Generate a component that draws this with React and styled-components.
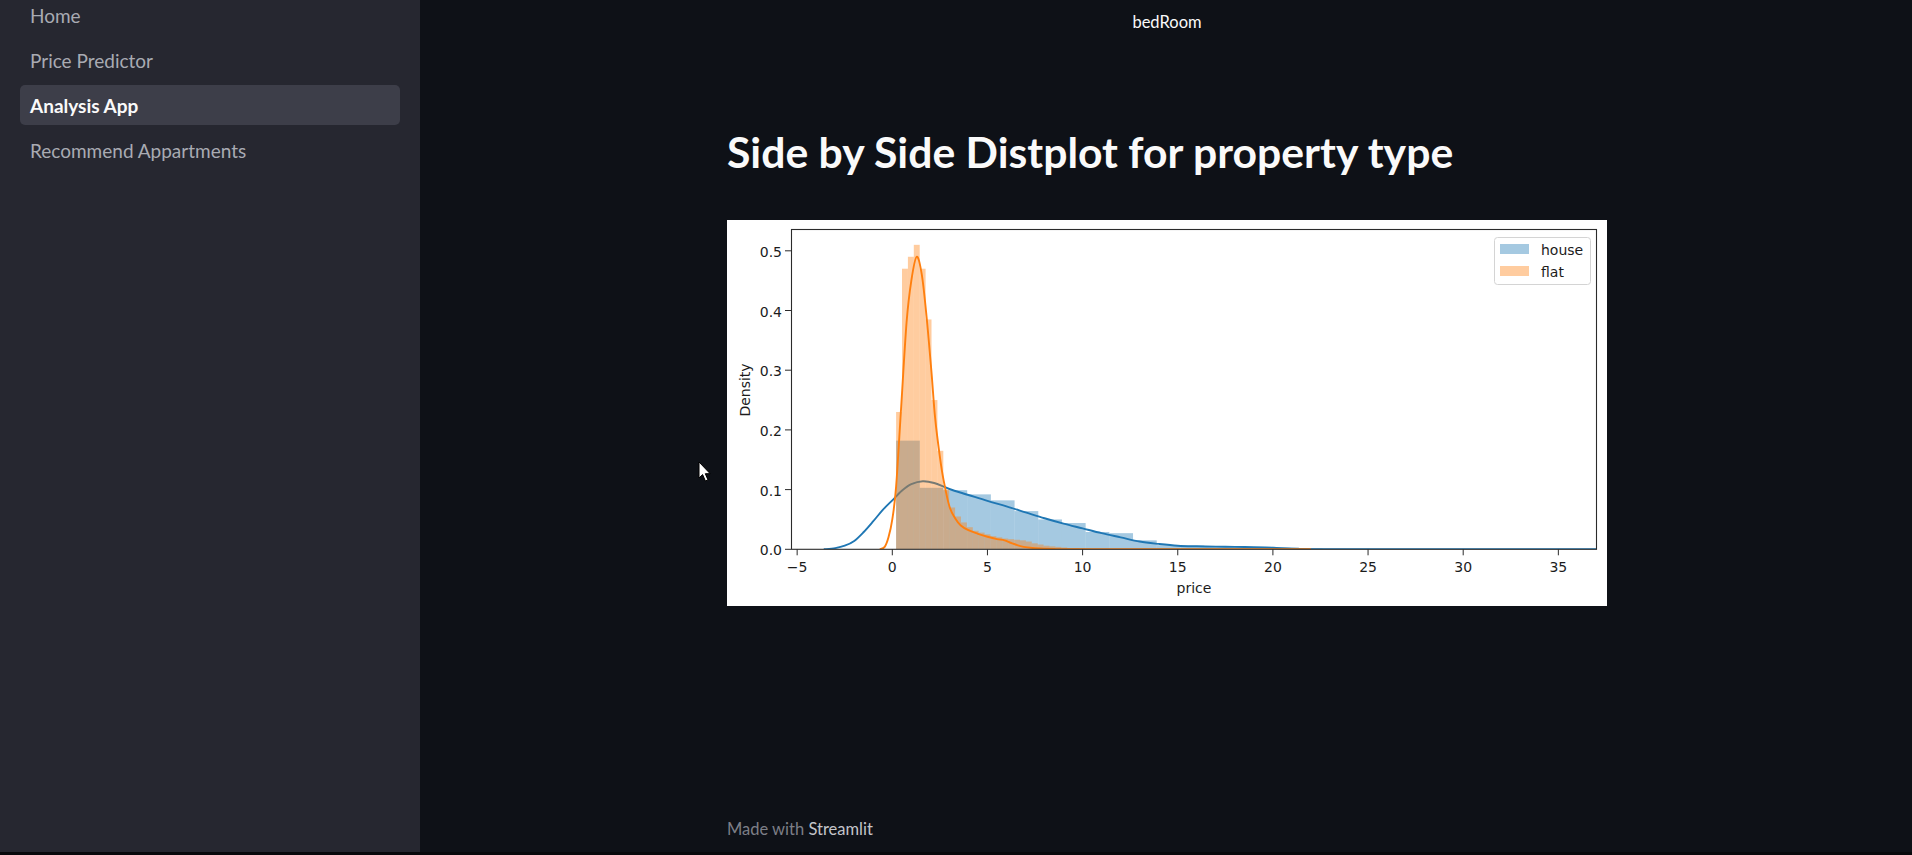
import React from "react";
import styled, { createGlobalStyle } from "styled-components";

const GlobalStyle = createGlobalStyle`
  html, body {
    margin: 0;
    padding: 0;
    background: #08090c;
    overflow: hidden;
  }
  * {
    box-sizing: border-box;
  }
`;

// chart geometry (pixels inside the 880x386 figure)
const X0 = 165.3; // x = 0
const SX = 19.03; // px per unit of price
const Y0 = 329.3; // density = 0
const SY = 597; // px per unit of density
const AX = { left: 64, right: 870, top: 9, bottom: 329.3 };

const px = (x) => X0 + x * SX;
const py = (y) => Y0 - y * SY;

const BLUE = "#1f77b4";
const ORANGE = "#ff7f0e";

const houseKde = [
  [-3.6, 0], [-3.0, 0.002], [-2.5, 0.006], [-2.0, 0.014], [-1.5, 0.029],
  [-1.0, 0.047], [-0.5, 0.066], [0, 0.082], [0.5, 0.098], [1.0, 0.109],
  [1.6, 0.114], [2.2, 0.111], [3.0, 0.101], [4.0, 0.091], [5.0, 0.081],
  [6.0, 0.072], [7.0, 0.062], [8.0, 0.052], [9.0, 0.043], [10.0, 0.035],
  [11.0, 0.027], [12.0, 0.02], [13.0, 0.013], [14.0, 0.009], [15.0, 0.006],
  [16.0, 0.005], [17.0, 0.0045], [18.0, 0.004], [19.0, 0.0035], [20.0, 0.0025],
  [21.0, 0.001], [22.0, 0.0003], [23.0, 0], [38, 0],
];

const flatKde = [
  [-0.65, 0], [-0.4, 0.004], [-0.2, 0.02], [0, 0.05], [0.2, 0.105],
  [0.45, 0.23], [0.75, 0.38], [1.0, 0.45], [1.28, 0.49], [1.55, 0.46],
  [1.8, 0.39], [2.05, 0.3], [2.25, 0.22], [2.5, 0.155], [2.7, 0.115],
  [3.0, 0.072], [3.3, 0.052], [3.6, 0.04], [4.0, 0.032], [4.5, 0.026],
  [5.0, 0.021], [5.5, 0.017], [5.9, 0.015], [6.3, 0.01], [6.9, 0.004],
  [7.5, 0.002], [8.5, 0.0005], [10, 0], [22, 0],
];

const houseBins = {
  start: 0.2,
  width: 1.245,
  heights: [
    0.182, 0.103, 0.099, 0.092, 0.082, 0.064, 0.05, 0.044, 0.029, 0.027,
    0.015, 0.007, 0.006, 0.005, 0.004, 0.004, 0.003, 0.0015, 0.001, 0.0008,
    0.0005, 0.0005, 0.0004, 0.0004,
  ],
};

const flatBins = {
  start: 0.2,
  width: 0.31,
  heights: [
    0.23, 0.47, 0.49, 0.51, 0.47, 0.385, 0.25, 0.165, 0.1, 0.07, 0.055,
    0.045, 0.037, 0.031, 0.028, 0.025, 0.022, 0.02, 0.018, 0.017, 0.016,
    0.015, 0.013, 0.01, 0.008, 0.006, 0.005, 0.004, 0.003, 0.002, 0.002,
    0.0015, 0.001,
  ],
};

// catmull-rom -> cubic bezier so the kde lines come out smooth
function smoothPath(points) {
  const p = points.map(([x, y]) => [px(x), py(y)]);
  let d = `M${p[0][0].toFixed(2)},${p[0][1].toFixed(2)}`;
  for (let i = 0; i < p.length - 1; i++) {
    const p0 = p[i - 1] || p[i];
    const p1 = p[i];
    const p2 = p[i + 1];
    const p3 = p[i + 2] || p2;
    const c1 = [p1[0] + (p2[0] - p0[0]) / 6, p1[1] + (p2[1] - p0[1]) / 6];
    const c2 = [p2[0] - (p3[0] - p1[0]) / 6, p2[1] - (p3[1] - p1[1]) / 6];
    d += ` C${c1[0].toFixed(2)},${c1[1].toFixed(2)} ${c2[0].toFixed(2)},${c2[1].toFixed(2)} ${p2[0].toFixed(2)},${p2[1].toFixed(2)}`;
  }
  return d;
}

function Bars({ bins, color }) {
  return (
    <g fill={color} fillOpacity={0.4}>
      {bins.heights.map((h, i) => {
        const x = bins.start + i * bins.width;
        return (
          <rect
            key={i}
            x={px(x)}
            y={py(h)}
            width={bins.width * SX}
            height={h * SY}
          />
        );
      })}
    </g>
  );
}

const xTicks = [-5, 0, 5, 10, 15, 20, 25, 30, 35];
const yTicks = [0, 0.1, 0.2, 0.3, 0.4, 0.5];

function DistPlot() {
  return (
    <svg width="880" height="386" viewBox="0 0 880 386">
      <defs>
        <clipPath id="axes-clip">
          <rect
            x={AX.left}
            y={AX.top}
            width={AX.right - AX.left}
            height={AX.bottom - AX.top}
          />
        </clipPath>
      </defs>

      <g clipPath="url(#axes-clip)">
        <Bars bins={houseBins} color={BLUE} />
        <path d={smoothPath(houseKde)} fill="none" stroke={BLUE} strokeWidth="1.9" />
        <Bars bins={flatBins} color={ORANGE} />
        <path d={smoothPath(flatKde)} fill="none" stroke={ORANGE} strokeWidth="1.9" />
      </g>

      <rect
        x={AX.left + 0.5}
        y={AX.top + 0.5}
        width={AX.right - AX.left - 1}
        height={AX.bottom - AX.top - 0.5}
        fill="none"
        stroke="#2b2b2b"
        strokeWidth="1.1"
      />

      <g fontFamily="'DejaVu Sans', sans-serif" fontSize="14" fill="#1c1c1c">
        {xTicks.map((t) => (
          <g key={t}>
            <line x1={px(t)} x2={px(t)} y1={AX.bottom} y2={AX.bottom + 6} stroke="#2b2b2b" strokeWidth="1" />
            <text x={px(t)} y={352} textAnchor="middle">
              {t < 0 ? `\u2212${Math.abs(t)}` : t}
            </text>
          </g>
        ))}
        {yTicks.map((t) => (
          <g key={t}>
            <line x1={AX.left - 6} x2={AX.left} y1={py(t)} y2={py(t)} stroke="#2b2b2b" strokeWidth="1" />
            <text x={55} y={py(t) + 6} textAnchor="end">
              {t.toFixed(1)}
            </text>
          </g>
        ))}
        <text x={(AX.left + AX.right) / 2} y={373} textAnchor="middle">
          price
        </text>
        <text x={23} y={170} textAnchor="middle" transform="rotate(-90 23 170)">
          Density
        </text>

        {/* legend */}
        <rect x="767.5" y="17.5" width="96" height="47" rx="3" fill="#fff" fillOpacity="0.8" stroke="#d4d4d4" />
        <rect x="773" y="24" width="29" height="10" fill={BLUE} fillOpacity="0.4" />
        <rect x="773" y="46" width="29" height="10" fill={ORANGE} fillOpacity="0.4" />
        <text x="814" y="34.5">house</text>
        <text x="814" y="56.5">flat</text>
      </g>
    </svg>
  );
}

function Cursor() {
  return (
    <CursorMark width="14" height="22" viewBox="0 0 14 22">
      <path
        d="M1 1 L1 17 L4.6 13.6 L7.4 20 L10 18.9 L7.3 12.7 L12.2 12.7 Z"
        fill="#fff"
        stroke="#000"
        strokeWidth="1"
        strokeLinejoin="round"
      />
    </CursorMark>
  );
}

const pages = ["Home", "Price Predictor", "Analysis App", "Recommend Appartments"];

export default function App() {
  return (
    <>
      <GlobalStyle />
      <Shell>
        <Sidebar>
          <NavList>
            {pages.map((p) => (
              <NavItem key={p} $active={p === "Analysis App"}>
                {p}
              </NavItem>
            ))}
          </NavList>
        </Sidebar>

        <Main>
          <TopLabel>bedRoom</TopLabel>
          <Column>
            <Title>Side by Side Distplot for property type</Title>
            <ChartFrame>
              <DistPlot />
            </ChartFrame>
            <Footer>
              Made with <Brand>Streamlit</Brand>
            </Footer>
          </Column>
        </Main>

        <Cursor />
      </Shell>
    </>
  );
}

const Shell = styled.div`
  position: relative;
  display: flex;
  height: 852px;
  background: #0e1117;
  font-family: "Lato", "Noto Sans", sans-serif;
`;

const Sidebar = styled.aside`
  width: 420px;
  flex-shrink: 0;
  background: #262730;
  padding: 0 20px;
  overflow: hidden;
`;

const NavList = styled.nav`
  display: flex;
  flex-direction: column;
  gap: 5px;
  margin-top: -5px;
`;

const NavItem = styled.div`
  display: flex;
  align-items: center;
  height: 40px;
  padding: 0 10px;
  border-radius: 5px;
  font-size: 19px;
  font-weight: ${(p) => (p.$active ? 700 : 400)};
  color: ${(p) => (p.$active ? "#fafafa" : "#a9abb3")};
  background: ${(p) => (p.$active ? "#3d3e49" : "transparent")};
`;

const Main = styled.main`
  flex: 1;
  display: flex;
  flex-direction: column;
  align-items: center;
  padding-top: 12px;
  padding-left: 2px;
`;

const TopLabel = styled.div`
  font-size: 16.5px;
  line-height: 20px;
  color: #fafafa;
`;

const Column = styled.section`
  width: 880px;
  flex: 1;
  display: flex;
  flex-direction: column;
`;

const Title = styled.h1`
  margin: 94px 0 0;
  font-size: 42.7px;
  line-height: 1.2;
  font-weight: 700;
  color: #fafafa;
`;

const ChartFrame = styled.div`
  margin-top: 43px;
  width: 880px;
  height: 386px;
  background: #fff;

  svg {
    display: block;
  }
`;

const Footer = styled.footer`
  margin-top: auto;
  padding-bottom: 13px;
  font-size: 16.5px;
  line-height: 20px;
  color: #7d7f87;
`;

const Brand = styled.span`
  color: #c4c5ca;
`;

const CursorMark = styled.svg`
  position: absolute;
  left: 698px;
  top: 461px;
`;
